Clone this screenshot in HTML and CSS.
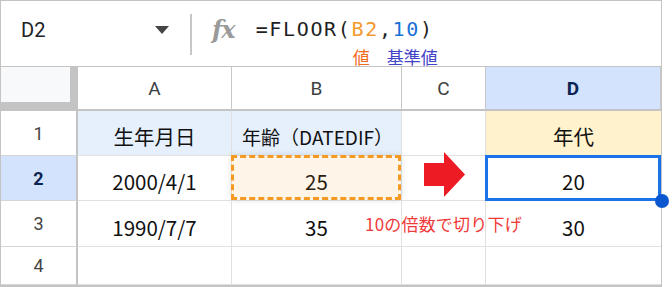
FILE: index.html
```html
<!DOCTYPE html>
<html>
<head>
  <title>FLOOR</title>
  <link rel="stylesheet" href="styles.css">
</head>
<body>
  <div class="sheet">
    <div class="formula-bar">
      <div class="name-box">
        <span class="cell-ref">D2</span>
        <span class="caret"></span>
      </div>
      <div class="divider"></div>
      <div class="fx">fx</div>
      <div class="formula">
        <div class="formula-text">=FLOOR(<span class="arg-ref">B2</span>,<span class="arg-num">10</span>)</div>
        <div class="hints"><span class="hint-ref">値</span><span class="hint-num">基準値</span></div>
      </div>
    </div>

    <div class="grid">
      <div class="corner"></div>
      <div class="col-head">A</div>
      <div class="col-head">B</div>
      <div class="col-head">C</div>
      <div class="col-head active">D</div>

      <div class="row-head">1</div>
      <div class="cell label">生年月日</div>
      <div class="cell label overflow">年齢（DATEDIF）</div>
      <div class="cell"></div>
      <div class="cell result-head">年代</div>

      <div class="row-head active">2</div>
      <div class="cell">2000/4/1</div>
      <div class="cell copied">25</div>
      <div class="cell arrow-cell">
        <svg class="arrow" width="41" height="45" viewBox="0 0 41 45">
          <polygon points="0,11 20,11 20,0 41,22.5 20,45 20,34 0,34" fill="#ed1c24"/>
        </svg>
      </div>
      <div class="cell selected">20<span class="handle"></span></div>

      <div class="row-head">3</div>
      <div class="cell">1990/7/7</div>
      <div class="cell">35</div>
      <div class="cell"></div>
      <div class="cell">30</div>

      <div class="row-head">4</div>
      <div class="cell"></div>
      <div class="cell"></div>
      <div class="cell"></div>
      <div class="cell"></div>
    </div>

    <div class="note">10の倍数で切り下げ</div>
  </div>
</body>
</html>
```

FILE: styles.css
```css
body {
  margin: 0;
  background: white;
  font-family: "Noto Sans CJK JP", "Noto Sans", sans-serif;
  color: #1f1f1f;
}
.sheet {
  position: relative;
  width: 660px;
  border: 1px solid #c4c4c4;
  border-bottom: 3px solid #c4c4c4;
}
.formula-bar {
  display: flex;
  align-items: flex-start;
  height: 65px;
  border-bottom: 1px solid #c4c4c4;
}
.name-box {
  width: 189px;
  height: 57px;
  box-sizing: border-box;
  padding: 0 21px 0 20px;
  display: flex;
  align-items: center;
  justify-content: space-between;
}
.cell-ref {
  font-family: Roboto, "Liberation Sans", sans-serif;
  font-size: 20px;
  color: #202124;
}
.caret {
  width: 0;
  height: 0;
  border-left: 7.5px solid transparent;
  border-right: 7.5px solid transparent;
  border-top: 8px solid #444;
}
.divider {
  width: 2px;
  height: 41px;
  margin-top: 13px;
  background: #c7c7c7;
}
.fx {
  margin: 14px 0 0 20px;
  font-family: "DejaVu Serif", serif;
  font-style: italic;
  font-weight: bold;
  font-size: 24px;
  color: #9a9a9a;
  letter-spacing: -1px;
}
.formula {
  margin: 16px 0 0 21px;
}
.formula-text {
  font-family: "DejaVu Sans Mono", monospace;
  font-size: 20px;
  letter-spacing: 1.65px;
  line-height: 24px;
  color: #1f1f1f;
}
.arg-ref {
  color: #f39a2e;
}
.arg-num {
  color: #1a6fd6;
}
.hints {
  font-size: 17px;
  line-height: 20px;
  margin-top: 6px;
}
.hint-ref {
  margin-left: 97px;
  color: #f26b1d;
}
.hint-num {
  margin-left: 17px;
  color: #4343c8;
}
.grid {
  display: grid;
  grid-template-columns: 77px 154px 170px 84px 175px;
  grid-template-rows: 44px 45px 45px 46px 38px;
}
.grid > div {
  box-sizing: border-box;
  display: flex;
  align-items: center;
  justify-content: center;
}
.corner {
  background: #f8f9fa;
  border-right: 8px solid #c4c4c4;
  border-bottom: 9px solid #c4c4c4;
}
.col-head {
  font-family: Roboto, "Liberation Sans", sans-serif;
  font-size: 19px;
  color: #3c4043;
  border-right: 1px solid #c7c7c7;
  border-bottom: 2px solid #c4c4c4;
}
.col-head:last-child {
  border-right: none;
}
.row-head {
  font-family: Roboto, "Liberation Sans", sans-serif;
  font-size: 18px;
  color: #444;
  border-right: 2px solid #c4c4c4;
  border-bottom: 1px solid #d6d6d6;
}
.col-head.active, .row-head.active {
  background: #d3e3fd;
  color: #0b2351;
  font-weight: bold;
}
.cell {
  position: relative;
  font-size: 20.5px;
  padding-top: 6px;
  color: #111;
  border-right: 1px solid #e1e1e1;
  border-bottom: 1px solid #e1e1e1;
}
.cell:nth-child(5n) {
  border-right: none;
}
.label {
  background: #e5f0fc;
}
.overflow {
  justify-content: flex-start;
  padding-left: 2px;
  font-size: 19px;
  white-space: nowrap;
}
.result-head {
  background: #fff2cc;
}
.copied::after {
  content: "";
  position: absolute;
  inset: -1px 0 0 -1px;
  border: 3px dashed #f49a22;
  background: rgba(247, 152, 29, 0.1);
  box-shadow: 0 0 6px rgba(0, 0, 0, 0.12);
}
.arrow {
  position: absolute;
  left: 22px;
  top: -4px;
}
.selected::after {
  content: "";
  position: absolute;
  inset: -1px 0 -1px -1px;
  border: 3px solid #1a73e8;
}
.handle {
  position: absolute;
  right: -8px;
  bottom: -8px;
  width: 14px;
  height: 14px;
  border-radius: 50%;
  background: #0b57d0;
  z-index: 2;
}
.note {
  position: absolute;
  left: 364px;
  top: 210px;
  font-size: 17px;
  color: #f03a3a;
  letter-spacing: 0.2px;
}
```
